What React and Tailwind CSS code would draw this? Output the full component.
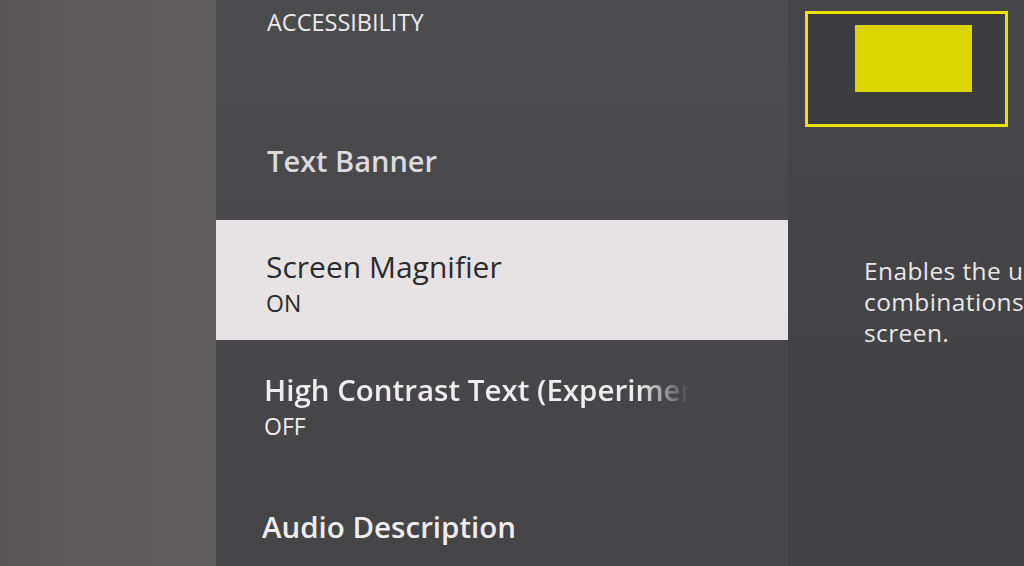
export default function App() {
  const font = { fontFamily: '"Open Sans", "Noto Sans", sans-serif' };
  return (
    <div className="flex h-[566px] w-[1024px] overflow-hidden" style={font}>
      <div className="h-full w-[216px] shrink-0 bg-[linear-gradient(90deg,#575456,#5f5c5e_60%,#615e60)]" />
      <div className="flex h-full w-[572px] shrink-0 flex-col bg-[linear-gradient(180deg,#4c4b4d,#474648_50%,#454446)]">
        <div className="h-[100px] pl-[51px] pt-[5px] text-[23.5px] text-[#ecebed]">ACCESSIBILITY</div>
        <div className="flex h-[120px] items-start pl-[51px] pt-[39px]">
          <span className="text-[29px] font-semibold text-[#dcdadc]">Text Banner</span>
        </div>
        <div className="flex h-[120px] flex-col bg-[#e7e3e5] pl-[50px] pt-[26px]">
          <span className="text-[30px] font-medium leading-[42px] text-[#2b2a2c]">Screen Magnifier</span>
          <span className="text-[23px] leading-[30px] text-[#2b2a2c]">ON</span>
        </div>
        <div className="flex h-[120px] flex-col pl-[48px] pt-[29px]">
          <span className="w-[426px] overflow-hidden whitespace-nowrap text-[29.5px] font-semibold leading-[42px] text-[#efedef] [mask-image:linear-gradient(90deg,black_88%,transparent)]">
            High Contrast Text (Experimental)
          </span>
          <span className="text-[23px] leading-[30px] text-[#efedef]">OFF</span>
        </div>
        <div className="flex flex-1 items-start pl-[46px] pt-[45px]">
          <span className="text-[29.5px] font-semibold text-[#efedef]">Audio Description</span>
        </div>
      </div>
      <div className="flex h-full min-w-0 flex-1 flex-col bg-[linear-gradient(180deg,#454446,#424143)]">
        <div className="ml-[17px] mt-[11px] flex h-[116px] w-[203px] items-start border-[3px] border-[#e8e300] bg-[#3d3c3e] pl-[47px] pt-[11px]">
          <div className="h-[67px] w-[117px] bg-[#dcd700]" />
        </div>
        <div className="ml-[76px] mt-[128px] flex flex-col overflow-hidden text-[24.5px] leading-[31px] tracking-[0.4px] text-[#e9e7e9]">
          <span className="whitespace-nowrap">Enables the use of</span>
          <span className="whitespace-nowrap">combinations to</span>
          <span className="whitespace-nowrap">screen.</span>
        </div>
      </div>
    </div>
  );
}
